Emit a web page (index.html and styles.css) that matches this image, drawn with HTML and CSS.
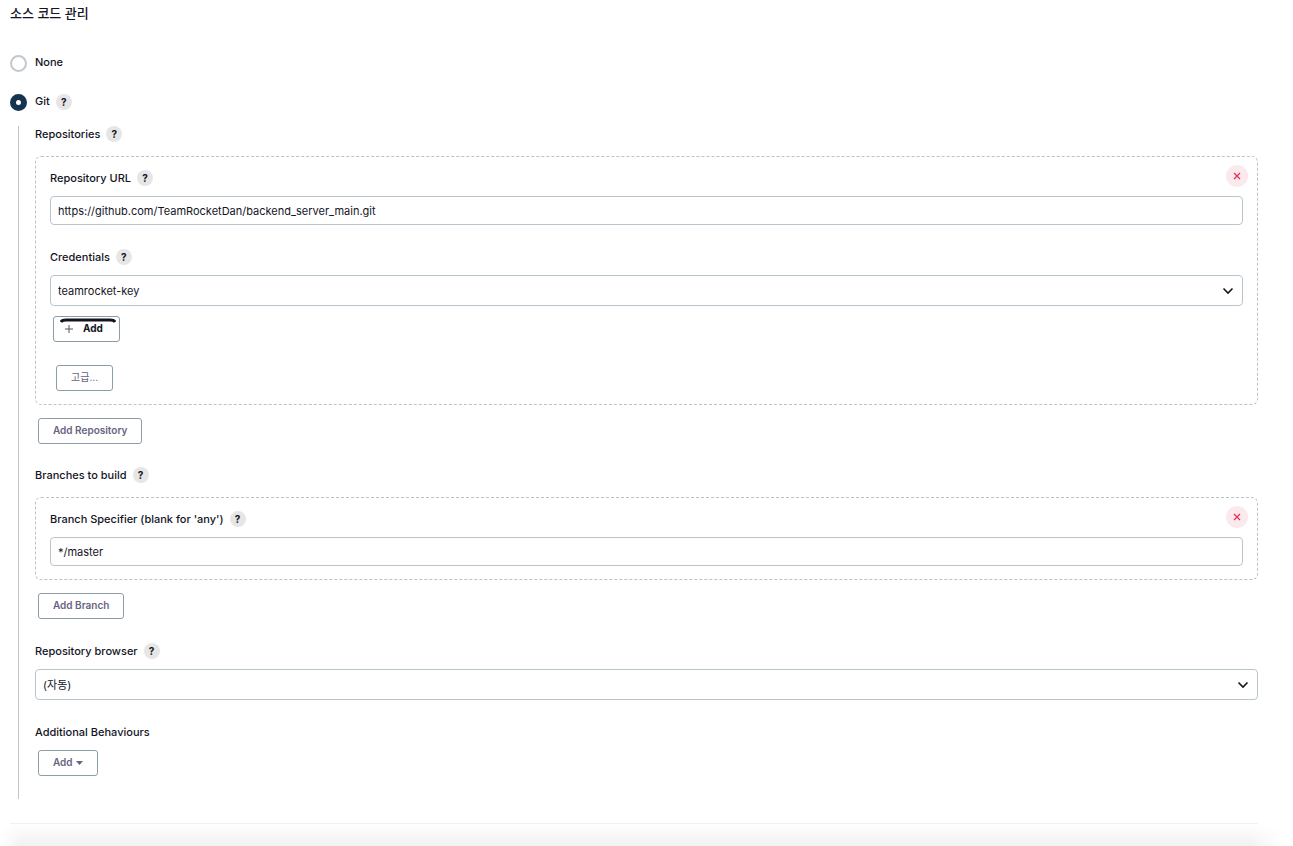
FILE: index.html
```html
<!DOCTYPE html>
<html lang="ko">
  <head>
    <meta charset="UTF-8">
    <meta name="viewport" content="width=device-width, initial-scale=1.0">
    <title>소스 코드 관리</title>
    <link rel="stylesheet" href="styles.css">
  </head>
  <body>
    <form class="config">
      <h2 class="section-title">소스 코드 관리</h2>

      <div class="radio-row">
        <input type="radio" name="scm" id="scm-none">
        <label for="scm-none">None</label>
      </div>
      <div class="radio-row">
        <input type="radio" name="scm" id="scm-git" checked>
        <label for="scm-git">Git</label>
        <button type="button" class="help" aria-label="Help for Git">?</button>
      </div>

      <div class="nested">
        <div class="label-row group-label">
          <span>Repositories</span>
          <button type="button" class="help" aria-label="Help for Repositories">?</button>
        </div>
        <div class="chunk">
          <button type="button" class="remove" aria-label="Remove repository">
            <svg width="8" height="8" viewBox="0 0 8 8"><path d="M1 1l6 6M7 1L1 7"/></svg>
          </button>
          <div class="label-row">
            <label for="repo-url">Repository URL</label>
            <button type="button" class="help" aria-label="Help for Repository URL">?</button>
          </div>
          <input type="text" class="field" id="repo-url" value="https://github.com/TeamRocketDan/backend_server_main.git">

          <div class="label-row next">
            <label for="credentials">Credentials</label>
            <button type="button" class="help" aria-label="Help for Credentials">?</button>
          </div>
          <select class="field" id="credentials">
            <option>teamrocket-key</option>
          </select>

          <button type="button" class="btn btn-credentials">
            <svg class="arc" width="56" height="5" viewBox="0 0 56 5"><path d="M1 4Q2 2 6 2H50Q54 2 55 4"/></svg>
            <svg class="plus" width="8" height="8" viewBox="0 0 8 8"><path d="M4 0v8M0 4h8"/></svg>
            Add
          </button>
          <button type="button" class="btn btn-advanced">고급...</button>
        </div>
        <button type="button" class="btn btn-add">Add Repository</button>

        <div class="label-row group-label next">
          <span>Branches to build</span>
          <button type="button" class="help" aria-label="Help for Branches to build">?</button>
        </div>
        <div class="chunk">
          <button type="button" class="remove" aria-label="Remove branch">
            <svg width="8" height="8" viewBox="0 0 8 8"><path d="M1 1l6 6M7 1L1 7"/></svg>
          </button>
          <div class="label-row">
            <label for="branch">Branch Specifier (blank for 'any')</label>
            <button type="button" class="help" aria-label="Help for Branch Specifier">?</button>
          </div>
          <input type="text" class="field" id="branch" value="*/master">
        </div>
        <button type="button" class="btn btn-add">Add Branch</button>

        <div class="label-row next">
          <label for="browser">Repository browser</label>
          <button type="button" class="help" aria-label="Help for Repository browser">?</button>
        </div>
        <select class="field" id="browser">
          <option>(자동)</option>
        </select>

        <div class="label-row next">
          <span>Additional Behaviours</span>
        </div>
        <button type="button" class="btn btn-menu">
          Add
          <svg width="7" height="4" viewBox="0 0 7 4"><path d="M0 0h7L3.500 4z"/></svg>
        </button>
      </div>
    </form>
    <div class="bottom-shade"></div>
  </body>
</html>
```

FILE: styles.css
```css
* {
  box-sizing: border-box;
}

body {
  margin: 0;
  min-height: 100vh;
  display: flex;
  flex-direction: column;
  background: #fff;
  color: #14141f;
  font-family: Inter, "Noto Sans CJK KR", sans-serif;
  font-size: 11px;
  line-height: 16px;
}

button,
input,
select {
  margin: 0;
  font: inherit;
  color: inherit;
}

button {
  padding: 0;
  border: none;
  cursor: pointer;
}

.config {
  margin: 0 35px 0 10px;
  padding: 3px 0 24px;
  border-bottom: 1px solid #f0f0f0;
}

.section-title {
  margin: 0 0 31px;
  font-size: 13px;
  font-weight: 500;
  line-height: 20px;
}

.radio-row {
  display: flex;
  align-items: center;
  height: 18px;
  margin-bottom: 21px;
}

.radio-row input {
  appearance: none;
  width: 17px;
  height: 17px;
  margin-right: 8px;
  border: 2px solid #bfc9cf;
  border-radius: 50%;
  background: #fff;
}

.radio-row input:checked {
  border: 6px solid #14344f;
}

.radio-row label {
  margin-bottom: 2px;
}

.label-row,
.radio-row {
  font-weight: 500;
}

.help {
  width: 16px;
  height: 16px;
  margin-left: 6px;
  border-radius: 50%;
  background: #e6e6e6;
  font-size: 10px;
  font-weight: 700;
  line-height: 16px;
  text-align: center;
}

/* settings that belong to the selected radio */
.nested {
  margin: -6px 0 0 8px;
  padding: 0 0 23px 16px;
  border-left: 1px solid #bac6cd;
}

.label-row {
  display: flex;
  align-items: center;
  height: 16px;
  margin-bottom: 10px;
}

.next {
  margin-top: 24px;
}

.group-label {
  margin-bottom: 14px;
}

.group-label.next {
  margin-top: 23px;
}

.chunk {
  position: relative;
  padding: 13px 14px;
  border: 1px dashed #bbc3c7;
  border-radius: 6px;
}

.remove {
  position: absolute;
  top: 8px;
  right: 9px;
  display: flex;
  align-items: center;
  justify-content: center;
  width: 22px;
  height: 22px;
  border-radius: 50%;
  background: #fce9ed;
}

.remove svg {
  fill: none;
  stroke: #e6304f;
  stroke-width: 1.3;
}

.field {
  display: block;
  width: 100%;
  height: 29px;
  padding: 0 7px;
  border: 1px solid #b9c5cc;
  border-radius: 4px;
  background: #fff;
}

select.field {
  appearance: none;
  height: 31px;
  background: #fff url("data:image/svg+xml,%3Csvg xmlns='http://www.w3.org/2000/svg' width='12' height='8' viewBox='0 0 12 8'%3E%3Cpath d='M1.500 1.500L6 6l4.500-4.500' fill='none' stroke='%2314141f' stroke-width='1.600'/%3E%3C/svg%3E") no-repeat right 8px center;
}

.btn {
  display: flex;
  align-items: center;
  height: 26px;
  padding: 0 14px 2px;
  border: 1px solid #8c9da8;
  border-radius: 3px;
  background: #fff;
  color: #68647f;
  font-size: 10px;
  font-weight: 600;
}

.btn-credentials {
  position: relative;
  margin: 10px 3px 0;
  padding: 0 16px 2px 11px;
  color: #14141f;
  font-weight: 700;
}

.plus {
  margin: 2px 10px 0 0;
  stroke: #55555f;
}

.arc {
  position: absolute;
  top: 1px;
  left: 6px;
  fill: none;
  stroke: #14141f;
  stroke-width: 3;
}

.btn-advanced {
  margin: 23px 6px 0;
  font-weight: 400;
}

.btn-add {
  margin: 13px 3px 0;
}

.btn-menu {
  gap: 3px;
  margin-left: 3px;
}

.btn-menu svg {
  margin-top: 2px;
  fill: #68647f;
}

/* soft shadow above the save bar */
.bottom-shade {
  flex: 1;
  min-height: 22px;
  margin-right: 10px;
  background: linear-gradient(to bottom, #fff, #f1f1f1);
  mask-image: linear-gradient(to right, transparent, #000 20px, #000 calc(100% - 34px), transparent);
}
```
